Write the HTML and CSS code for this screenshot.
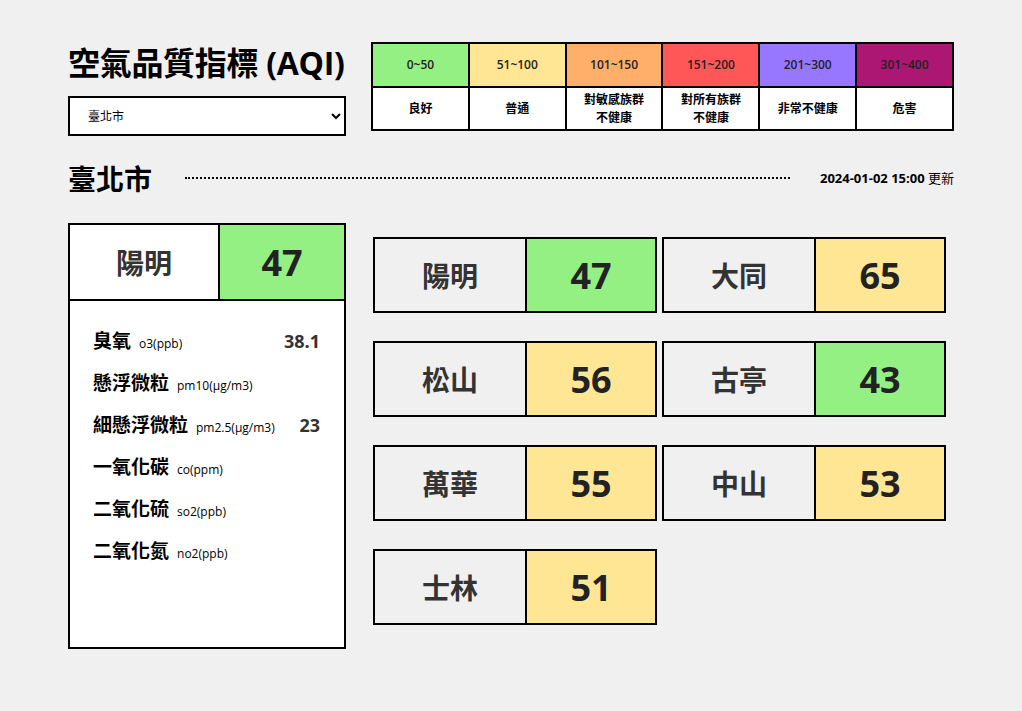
FILE: index.html
```html
<!DOCTYPE html>
<html lang="zh-Hant">
<head>
<meta charset="utf-8">
<title>空氣品質指標 (AQI)</title>
<link rel="stylesheet" href="styles.css">
</head>
<body>
<div class="container">
  <header class="header">
    <div class="header-left">
      <h1 class="title">空氣品質指標 (AQI)</h1>
      <select class="city-select">
        <option>臺北市</option>
      </select>
    </div>
    <table class="legend">
      <tr class="legend-range">
        <td class="lv1">0~50</td>
        <td class="lv2">51~100</td>
        <td class="lv3">101~150</td>
        <td class="lv4">151~200</td>
        <td class="lv5">201~300</td>
        <td class="lv6">301~400</td>
      </tr>
      <tr class="legend-label">
        <td>良好</td>
        <td>普通</td>
        <td>對敏感族群<br>不健康</td>
        <td>對所有族群<br>不健康</td>
        <td>非常不健康</td>
        <td>危害</td>
      </tr>
    </table>
  </header>

  <div class="section-head">
    <h2 class="city-name">臺北市</h2>
    <div class="dots"></div>
    <div class="updated"><b>2024-01-02 15:00</b> 更新</div>
  </div>

  <main class="main">
    <section class="detail">
      <div class="detail-top">
        <div class="detail-name">陽明</div>
        <div class="detail-aqi lv1">47</div>
      </div>
      <ul class="pollutants">
        <li><span class="p-name">臭氧</span><span class="p-unit">o3(ppb)</span><span class="p-val">38.1</span></li>
        <li><span class="p-name">懸浮微粒</span><span class="p-unit">pm10(μg/m3)</span><span class="p-val"></span></li>
        <li><span class="p-name">細懸浮微粒</span><span class="p-unit">pm2.5(μg/m3)</span><span class="p-val">23</span></li>
        <li><span class="p-name">一氧化碳</span><span class="p-unit">co(ppm)</span><span class="p-val"></span></li>
        <li><span class="p-name">二氧化硫</span><span class="p-unit">so2(ppb)</span><span class="p-val"></span></li>
        <li><span class="p-name">二氧化氮</span><span class="p-unit">no2(ppb)</span><span class="p-val"></span></li>
      </ul>
    </section>

    <section class="stations">
      <div class="station"><div class="st-name">陽明</div><div class="st-aqi lv1">47</div></div>
      <div class="station"><div class="st-name">大同</div><div class="st-aqi lv2">65</div></div>
      <div class="station"><div class="st-name">松山</div><div class="st-aqi lv2">56</div></div>
      <div class="station"><div class="st-name">古亭</div><div class="st-aqi lv1">43</div></div>
      <div class="station"><div class="st-name">萬華</div><div class="st-aqi lv2">55</div></div>
      <div class="station"><div class="st-name">中山</div><div class="st-aqi lv2">53</div></div>
      <div class="station"><div class="st-name">士林</div><div class="st-aqi lv2">51</div></div>
    </section>
  </main>
</div>
</body>
</html>
```

FILE: styles.css
```css
* {
  box-sizing: border-box;
}

body {
  margin: 0;
  background: #f0f0f0;
  font-family: "Open Sans", "Noto Sans CJK TC", sans-serif;
  color: #000;
}

.container {
  width: 886px;
  margin: 0 auto;
  padding-top: 40px;
}

.header {
  display: flex;
  justify-content: space-between;
  align-items: flex-start;
}

.header-left {
  width: 278px;
  display: flex;
  flex-direction: column;
}

.title {
  margin: 0 0 10px;
  font-size: 32px;
  line-height: 46px;
  font-weight: 700;
  letter-spacing: -0.3px;
  white-space: nowrap;
}

.city-select {
  width: 278px;
  height: 40px;
  border: 2px solid #000;
  background: #fff;
  font-family: "Open Sans", "Noto Sans CJK TC", sans-serif;
  font-size: 12px;
  padding: 0 8px 0 14px;
  color: #000;
  border-radius: 0;
}

.legend {
  margin-top: 2px;
  width: 583px;
  border-collapse: collapse;
  table-layout: fixed;
  font-size: 12px;
  font-weight: 600;
  color: #222;
}

.legend td {
  border: 2px solid #000;
  text-align: center;
  vertical-align: middle;
  padding: 0;
  line-height: 18px;
}

.legend-range td {
  height: 44px;
}

.legend-label td {
  height: 43px;
  background: #fff;
  color: #000;
}

.lv1 { background: #95f084; }
.lv2 { background: #ffe695; }
.lv3 { background: #ffaf6a; }
.lv4 { background: #ff5757; }
.lv5 { background: #9777ff; }
.lv6 { background: #ad1774; }

.section-head {
  margin-top: 23px;
  display: flex;
  align-items: center;
  height: 40px;
}

.city-name {
  margin: 0;
  font-size: 28px;
  line-height: 40px;
  font-weight: 700;
}

.dots {
  flex: 1;
  margin: -2px 30px 0 33px;
  border-top: 2px dotted #000;
}

.updated {
  font-size: 13px;
  margin-top: -3px;
}

.main {
  margin-top: 24px;
  display: flex;
  align-items: flex-start;
  gap: 27px;
}

.detail {
  width: 278px;
  height: 426px;
  border: 2px solid #000;
  background: #fff;
  flex-shrink: 0;
}

.detail-top {
  display: flex;
  height: 76px;
  border-bottom: 2px solid #000;
}

.detail-name {
  width: 150px;
  border-right: 2px solid #000;
  display: flex;
  align-items: center;
  justify-content: center;
  font-size: 28px;
  font-weight: 700;
  color: #333;
}

.detail-aqi {
  flex: 1;
  display: flex;
  align-items: center;
  justify-content: center;
  font-size: 36px;
  font-weight: 700;
  color: #222;
}

.pollutants {
  list-style: none;
  margin: 0;
  padding: 19px 24px 0 23px;
}

.pollutants li {
  display: flex;
  align-items: baseline;
  height: 42px;
  line-height: 42px;
}

.p-name {
  font-size: 19px;
  font-weight: 700;
}

.p-unit {
  font-size: 12px;
  margin-left: 8px;
  color: #000;
}

.p-val {
  margin-left: auto;
  font-size: 18px;
  font-weight: 700;
  color: #333;
}

.stations {
  margin-top: 14px;
  display: grid;
  grid-template-columns: 284px 284px;
  column-gap: 5px;
  row-gap: 28px;
}

.station {
  display: flex;
  height: 76px;
  border: 2px solid #000;
}

.st-name {
  width: 152px;
  border-right: 2px solid #000;
  display: flex;
  align-items: center;
  justify-content: center;
  font-size: 28px;
  font-weight: 700;
  color: #333;
}

.st-aqi {
  flex: 1;
  display: flex;
  align-items: center;
  justify-content: center;
  font-size: 36px;
  font-weight: 700;
  color: #222;
}
```
